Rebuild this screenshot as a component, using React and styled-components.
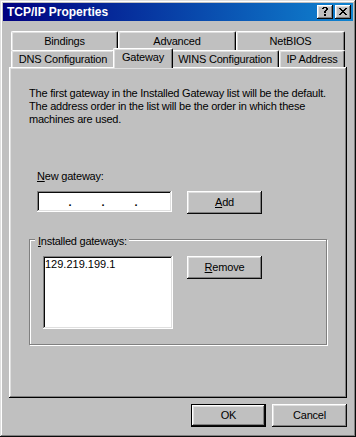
import React from 'react';
import styled, { createGlobalStyle } from 'styled-components';

const Global = createGlobalStyle`
  html, body { margin: 0; padding: 0; background: #c0c0c0; }
  body {
    font-family: "Liberation Sans", Arial, sans-serif;
    font-size: 11px;
    color: #000;
  }
  * { box-sizing: border-box; }
`;

const raised = `inset -1px -1px #0a0a0a, inset 1px 1px #fff, inset -2px -2px #808080, inset 2px 2px #dfdfdf`;
const sunken = `inset -1px -1px #fff, inset 1px 1px #808080, inset -2px -2px #dfdfdf, inset 2px 2px #0a0a0a`;

const Window = styled.div`
  width: 356px;
  height: 437px;
  padding: 3px;
  background: #c0c0c0;
  box-shadow: inset -1px -1px #0a0a0a, inset 1px 1px #dfdfdf, inset -2px -2px #808080, inset 2px 2px #fff;
  display: flex;
  flex-direction: column;
`;

const TitleBar = styled.div`
  height: 18px;
  flex: none;
  display: flex;
  align-items: center;
  padding: 0 2px 0 4px;
  background: linear-gradient(90deg, #000080, #1084d0);
  color: #fff;
`;

const Title = styled.span`
  flex: 1;
  font-weight: bold;
  font-size: 12px;
  line-height: 18px;
  white-space: nowrap;
`;

const TitleButton = styled.button`
  width: 16px;
  height: 14px;
  margin-left: ${p => p.$gap || 0}px;
  padding: ${p => p.$pad};
  border: 0;
  background: #c0c0c0;
  box-shadow: ${raised};
  display: flex;
  align-items: flex-start;
  justify-content: flex-start;
`;

const Body = styled.div`
  flex: 1;
  display: flex;
  flex-direction: column;
  padding: 10px 6px 7px;
`;

const TabStrip = styled.div`
  margin: 0 2px;
  display: flex;
  flex-direction: column;
`;

const TabRow = styled.div`
  display: flex;
  height: ${p => p.$h}px;
`;

const Tab = styled.div`
  position: relative;
  z-index: ${p => (p.$selected ? 2 : 1)};
  flex: none;
  width: ${p => p.$w}px;
  height: ${p => (p.$selected ? 20 : p.$h)}px;
  margin: ${p => (p.$selected ? '-2px -2px 0' : '0')};
  padding-bottom: ${p => (p.$selected ? 3 : 0)}px;
  background: #c0c0c0;
  border-top: 1px solid #fff;
  border-left: 1px solid #fff;
  border-right: 1px solid #000;
  border-radius: 2px 2px 0 0;
  box-shadow: inset -1px 0 #808080, inset 1px 1px #dfdfdf;
  display: flex;
  align-items: center;
  justify-content: center;
  white-space: nowrap;
  letter-spacing: -0.2px;
  line-height: 13px;
`;

const Panel = styled.div`
  height: 331px;
  flex: none;
  padding: 20px 20px 0 20px;
  box-shadow: inset -1px -1px #000, inset 1px 1px #fff, inset -2px -2px #808080, inset 2px 2px #dfdfdf;
  display: flex;
  flex-direction: column;
`;

const Info = styled.p`
  margin: 0;
  line-height: 13px;
  letter-spacing: -0.22px;
  white-space: nowrap;
`;

const FieldLabel = styled.div`
  margin: 44px 0 0 8px;
  line-height: 13px;
  letter-spacing: -0.2px;
`;

const FieldRow = styled.div`
  display: flex;
  align-items: flex-start;
  gap: 15px;
  margin: 8px 0 0 8px;
`;

const IpField = styled.div`
  width: 135px;
  height: 21px;
  background: #fff;
  box-shadow: ${sunken};
  display: flex;
  align-items: center;
  padding: 2px;
  line-height: 13px;
`;

const IpPart = styled.span`
  width: ${p => p.$w}px;
  flex: none;
`;

const IpDot = styled.span`
  width: 2px;
  flex: none;
  display: flex;
  justify-content: center;
  margin-top: 1px;
  font-weight: bold;
`;

const Button = styled.button`
  width: 75px;
  height: 23px;
  flex: none;
  padding: 0 0 1px;
  border: ${p => (p.$default ? '1px solid #000' : '0')};
  background: #c0c0c0;
  box-shadow: ${raised};
  font-family: inherit;
  font-size: 11px;
  color: #000;
  letter-spacing: -0.2px;
`;

const GroupBox = styled.div`
  position: relative;
  margin-top: 25px;
  width: 298px;
  height: 106px;
  border: 1px solid #808080;
  box-shadow: 1px 1px 0 #fff, inset 1px 1px 0 #fff;
  display: flex;
  align-items: flex-start;
  gap: 14px;
  padding: 16px 0 0 13px;
`;

const GroupLegend = styled.span`
  position: absolute;
  top: -5px;
  left: 5px;
  padding: 0 2px 0 3px;
  background: #c0c0c0;
  line-height: 13px;
  letter-spacing: -0.25px;
`;

const ListBox = styled.div`
  width: 130px;
  height: 73px;
  background: #fff;
  box-shadow: ${sunken};
  padding: 2px;
`;

const ListItem = styled.div`
  line-height: 13px;
  height: 13px;
`;

const Footer = styled.div`
  display: flex;
  justify-content: flex-end;
  gap: 6px;
  margin-top: 6px;
`;

const CloseGlyph = () => (
  <svg width="8" height="7" viewBox="0 0 8 7" shapeRendering="crispEdges">
    <path
      fill="#000"
      d="M0 0h2v1H0zM6 0h2v1H6zM1 1h2v1H1zM5 1h2v1H5zM2 2h4v1H2zM3 3h2v1H3zM2 4h4v1H2zM1 5h2v1H1zM5 5h2v1H5zM0 6h2v1H0zM6 6h2v1H6z"
    />
  </svg>
);

const HelpGlyph = () => (
  <svg width="6" height="9" viewBox="0 0 6 9" shapeRendering="crispEdges">
    <path
      fill="#000"
      d="M1 0h4v1H1zM0 1h2v1H0zM4 1h2v1H4zM4 2h2v1H4zM3 3h2v1H3zM2 4h2v1H2zM2 5h2v1H2zM2 7h2v1H2zM2 8h2v1H2z"
    />
  </svg>
);

export default function App() {
  return (
    <>
      <Global />
      <Window>
        <TitleBar>
          <Title>TCP/IP Properties</Title>
          <TitleButton $pad="2px 0 0 5px" aria-label="Help"><HelpGlyph /></TitleButton>
          <TitleButton $gap={2} $pad="3px 0 0 4px" aria-label="Close"><CloseGlyph /></TitleButton>
        </TitleBar>
        <Body>
          <TabStrip>
            <TabRow $h={19}>
              <Tab $w={107} $h={19}>Bindings</Tab>
              <Tab $w={118} $h={19}>Advanced</Tab>
              <Tab $w={109} $h={19}>NetBIOS</Tab>
            </TabRow>
            <TabRow $h={17}>
              <Tab $w={104} $h={17}>DNS Configuration</Tab>
              <Tab $w={60} $h={17} $selected>Gateway</Tab>
              <Tab $w={108} $h={17}>WINS Configuration</Tab>
              <Tab $w={66} $h={17}>IP Address</Tab>
            </TabRow>
          </TabStrip>
          <Panel>
            <Info>
              The first gateway in the Installed Gateway list will be the default.
              <br />
              The address order in the list will be the order in which these
              <br />
              machines are used.
            </Info>
            <FieldLabel><u>N</u>ew gateway:</FieldLabel>
            <FieldRow>
              <IpField>
                <IpPart $w={30} />
                <IpDot>.</IpDot>
                <IpPart $w={31} />
                <IpDot>.</IpDot>
                <IpPart $w={31} />
                <IpDot>.</IpDot>
                <IpPart $w={30} />
              </IpField>
              <Button><u>A</u>dd</Button>
            </FieldRow>
            <GroupBox>
              <GroupLegend><u>I</u>nstalled gateways:</GroupLegend>
              <ListBox>
                <ListItem>129.219.199.1</ListItem>
              </ListBox>
              <Button><u>R</u>emove</Button>
            </GroupBox>
          </Panel>
          <Footer>
            <Button $default>OK</Button>
            <Button>Cancel</Button>
          </Footer>
        </Body>
      </Window>
    </>
  );
}
